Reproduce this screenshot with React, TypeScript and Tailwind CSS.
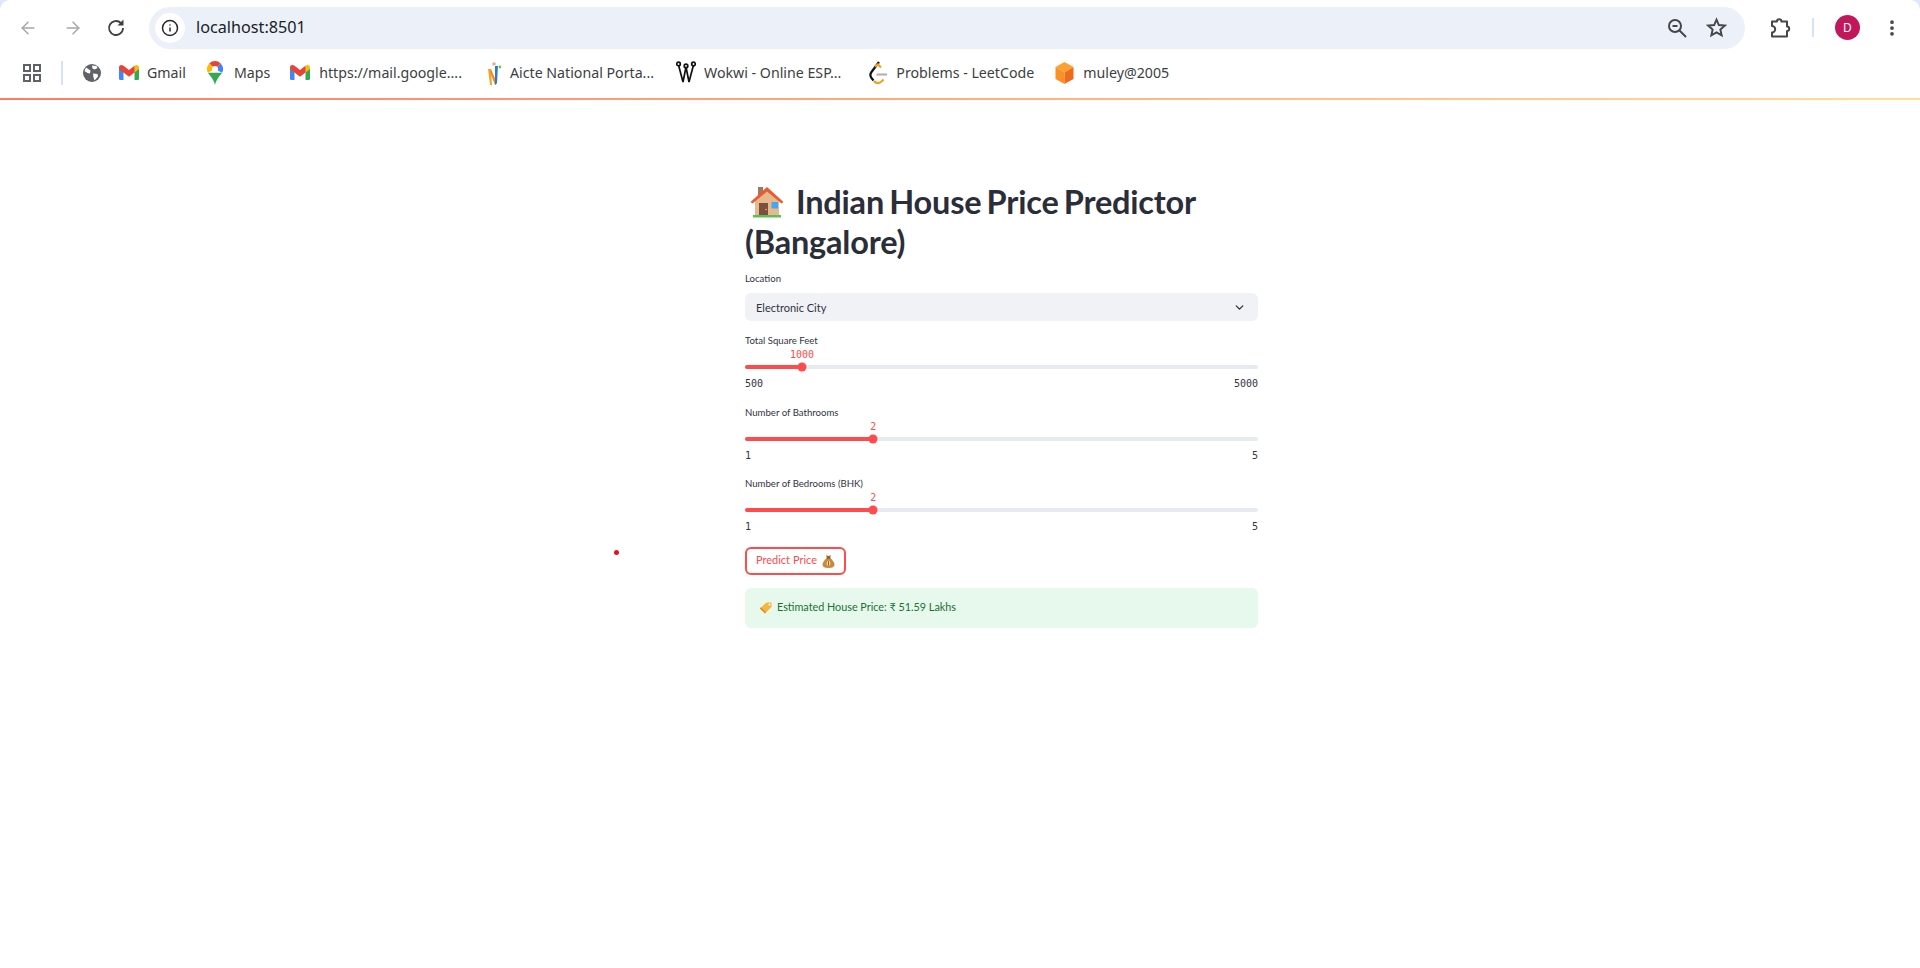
import { ArrowLeft, ArrowRight, Info, EllipsisVertical, ChevronDown } from "lucide-react";

const chromeFont = "font-['Noto_Sans','Open_Sans',sans-serif]";
const appFont = "font-['Lato','Noto_Sans',sans-serif]";
const monoFont = "font-['DejaVu_Sans_Mono','Liberation_Mono',monospace]";

const GmailIcon = () => (
  <svg width="20" height="15" viewBox="0 0 20 15">
    <path d="M0 3h4.500v12H1.200C.5 15 0 14.500 0 13.800z" fill="#4285f4" />
    <path d="M15.500 3H20v10.800c0 .7-.5 1.200-1.200 1.200h-3.300z" fill="#34a853" />
    <path d="M15.500.8Q16.500 0 17.500 0 20 0 20 2.500V4L15.500 7.500z" fill="#fbbc04" />
    <path d="M0 4V2.500Q0 0 2.500 0 3.500 0 4.500.8L10 5l5.500-4.200v6.700L10 11.800 4.500 7.500z" fill="#ea4335" />
  </svg>
);

const MapsIcon = () => (
  <svg width="16" height="24" viewBox="0 0 16 24">
    <path d="M1 11.800 15 11.800C13.500 14.500 9.500 17.500 8 24 6.500 17.500 2.500 14.500 1 11.800z" fill="#34a853" />
    <path d="M13.700 2.400A8 8 0 0 1 15 11.800L8 8z" fill="#4285f4" />
    <path d="M2.300 2.400A8 8 0 0 1 13.700 2.400L8 8z" fill="#ea4335" />
    <path d="M2.300 2.400A8 8 0 0 0 1 11.800L8 8z" fill="#fbbc04" />
    <circle cx="8" cy="8" r="3" fill="#fff" />
  </svg>
);

const AicteIcon = () => (
  <svg width="14" height="24" viewBox="0 0 14 24">
    <path d="M1 8h3l1 16H3z" fill="#f4a62a" />
    <path d="M4 8l6 14-2 2L3 11z" fill="#f08a24" />
    <path d="M8 5h3l-1 17-2 2z" fill="#2b7cc4" />
    <circle cx="7" cy="3" r="1.800" fill="#f2a98a" />
    <circle cx="13" cy="6" r="1.400" fill="#55c84a" />
  </svg>
);

const WokwiIcon = () => (
  <svg width="20" height="24" viewBox="0 0 20 24" fill="none" stroke="#111" strokeWidth="1.700">
    <path d="M2.500 4 7 21 10 6 13 21 17.500 4" />
    <circle cx="2.500" cy="3" r="1.800" />
    <circle cx="10" cy="5" r="1.800" />
    <circle cx="17.500" cy="3" r="1.800" />
  </svg>
);

const LeetcodeIcon = () => (
  <svg width="19" height="24" viewBox="0 0 19 24" fill="none" strokeWidth="2.200">
    <path d="M10 1 2.500 11c-1.500 2-1.500 4 0 6l2 2.500" stroke="#111" />
    <path d="M6 5.500 9 3.500l3 3" stroke="#f0a21b" />
    <path d="M5 20c2 2.500 5 2.500 7.500.5l2-2" stroke="#f0a21b" />
    <path d="M7.500 13.500H18" stroke="#b3b3b3" />
  </svg>
);

const CubeIcon = () => (
  <svg width="19" height="24" viewBox="0 0 19 24">
    <path d="M9.500 1 18.500 6 9.500 11.500.5 6z" fill="#ffa12e" />
    <path d="M.5 6l9 5.500V23l-9-5z" fill="#fb9026" />
    <path d="M9.500 11.500 18.500 6v12l-9 5z" fill="#ee6a1f" />
  </svg>
);

const GlobeIcon = () => (
  <svg width="18" height="18" viewBox="0 0 18 18">
    <circle cx="9" cy="9" r="9" fill="#5f6368" />
    <path d="M3 3.500 7.500 6.500 7 9.500 4.500 9 1.500 7zM9 1.500l4.500.5 1 2-3 1.500-2-1zM10 9.500l4.500.5.500 2.500-3.500 4-1-3z" fill="#fff" />
  </svg>
);

const GridIcon = () => (
  <svg width="18" height="18" viewBox="0 0 18 18" fill="none" stroke="#5f6368" strokeWidth="2">
    <rect x="1" y="1" width="6" height="6" />
    <rect x="11" y="1" width="6" height="6" />
    <rect x="1" y="11" width="6" height="6" />
    <rect x="11" y="11" width="6" height="6" />
  </svg>
);

const ReloadIcon = () => (
  <svg width="24" height="24" viewBox="0 0 24 24" className="ml-[21px]">
    <path d="M19 12a7 7 0 1 1-2.100-5" fill="none" stroke="#3c4043" strokeWidth="1.800" />
    <path d="M19.500 3.500V9.500H13.500z" fill="#3c4043" />
  </svg>
);

const ZoomOutIcon = () => (
  <svg width="24" height="24" viewBox="0 0 24 24" fill="none" stroke="#444746" strokeWidth="2" className="ml-auto">
    <circle cx="10" cy="10" r="6" />
    <path d="M14.500 14.500 21 21" />
    <path d="M7.500 10h5" />
  </svg>
);

const StarIcon = () => (
  <svg width="21" height="21" viewBox="0 0 24 24" fill="none" stroke="#444746" strokeWidth="2.200" className="mr-[18px] ml-[17px]">
    <path d="M12 3l2.700 6.200 6.800.6-5.100 4.500 1.500 6.700L12 17.500 6.100 21l1.500-6.700L2.500 9.800l6.800-.6z" />
  </svg>
);

const ExtensionIcon = () => (
  <svg width="24" height="24" viewBox="0 0 24 24" fill="none" stroke="#444746" strokeWidth="2" className="ml-[23px]">
    <path d="M4 5.500H9a2.200 2.200 0 0 1 4.400 0H19v5a2.200 2.200 0 0 1 0 4.400V20.500H4V16.500a3.200 3.200 0 0 0 0-6.400z" strokeLinejoin="round" />
  </svg>
);

const HouseEmoji = () => (
  <svg width="36" height="36" viewBox="0 0 36 36">
    <rect x="9" y="3" width="5" height="10" fill="#a1785c" />
    <path d="M6 16 18 6l12 10v15H6z" fill="#e8b98a" />
    <path d="M1.500 18 18 3l16.500 15-2 1.500L18 7.500 3.500 19.500z" fill="#ea5a35" />
    <rect x="10" y="19" width="9" height="12" fill="#7d4f3f" />
    <circle cx="17" cy="25.500" r=".8" fill="#e8b98a" />
    <rect x="22.500" y="18" width="6.500" height="6.500" fill="#3fa9f5" />
    <rect x="4" y="31" width="28" height="2.500" fill="#5cbf5c" />
  </svg>
);

const MoneyBag = () => (
  <svg width="13" height="14" viewBox="0 0 13 14">
    <path d="M4 1.200 6.500 2 9 1.200 8 4H5z" fill="#a8662d" />
    <path d="M5 4h3c2 1.500 4.500 4 4.500 6.500C12.500 13 10.500 14 6.500 14S.5 13 .5 10.500C.5 8 3 5.500 5 4z" fill="#c98a3c" />
    <rect x="4.600" y="3.500" width="3.800" height="1" fill="#7a4a1f" />
    <ellipse cx="6.500" cy="9.300" rx="1.800" ry="2.800" fill="#f3d9a4" />
    <rect x="6.100" y="7" width=".8" height="4.600" fill="#7a4a1f" />
  </svg>
);

const TagEmoji = () => (
  <svg width="13" height="12" viewBox="0 0 13 12">
    <path d="M7.500.500 12.500.500 12.500 5 6 11.500.8 6.500z" fill="#f4b63f" />
    <path d="M6 11.500.8 6.500 2 5.200 7 10.300z" fill="#d9922b" />
    <circle cx="10.500" cy="2.500" r="1" fill="#fff" />
  </svg>
);

const bookmarks = [
  { icon: <GmailIcon />, label: "Gmail", left: "ml-[18px]", textGap: "ml-[8px]" },
  { icon: <MapsIcon />, label: "Maps", left: "ml-[21px]", textGap: "ml-[11px]" },
  { icon: <GmailIcon />, label: "https://mail.google....", left: "ml-[20px]", textGap: "ml-[9px]" },
  { icon: <AicteIcon />, label: "Aicte National Porta...", left: "ml-[25px]", textGap: "ml-[9px]" },
  { icon: <WokwiIcon />, label: "Wokwi - Online ESP...", left: "ml-[22px]", textGap: "ml-[8px]" },
  { icon: <LeetcodeIcon />, label: "Problems - LeetCode", left: "ml-[28px]", textGap: "ml-[8px]" },
  { icon: <CubeIcon />, label: "muley@2005", left: "ml-[21px]", textGap: "ml-[9px]" },
];

const BrowserBar = () => (
  <div className={`${chromeFont} bg-[#dde8f8]`}>
    <div className="rounded-t-[10px] bg-white">
      <div className="flex h-[54px] items-center pt-[1px]">
        <ArrowLeft className="ml-[18px] text-[#a5a7aa]" size={20} strokeWidth={1.800} />
        <ArrowRight className="ml-[25px] text-[#a5a7aa]" size={20} strokeWidth={1.800} />
        <ReloadIcon />
        <div className="ml-[21px] flex h-[42px] w-[1596px] items-center rounded-full bg-[#ebf0f9]">
          <div className="ml-[6px] flex h-[30px] w-[30px] items-center justify-center rounded-full bg-white">
            <Info className="text-[#26282b]" size={18} strokeWidth={2} />
          </div>
          <span className="ml-[11px] text-[16.200px] text-[#202124]">localhost:8501</span>
          <ZoomOutIcon />
          <StarIcon />
        </div>
        <ExtensionIcon />
        <div className="ml-[20px] h-[19px] w-[2px] bg-[#d3e3fd]" />
        <div className="ml-[21px] flex h-[25px] w-[25px] items-center justify-center rounded-full bg-[#c2185b] text-[12px] text-white">
          D
        </div>
        <EllipsisVertical className="ml-[22px] text-[#444746]" size={20} strokeWidth={2.500} />
      </div>
      <div className="flex h-[44px] items-center pb-[6px]">
        <div className="ml-[23px]">
          <GridIcon />
        </div>
        <div className="ml-[20px] h-[24px] w-[2px] bg-[#d3e3fd]" />
        <div className="ml-[20px]">
          <GlobeIcon />
        </div>
        {bookmarks.map((b) => (
          <div key={b.label} className={`flex items-center ${b.left}`}>
            {b.icon}
            <span className={`${b.textGap} text-[14.200px] whitespace-nowrap text-[#3c4043]`}>{b.label}</span>
          </div>
        ))}
      </div>
      <div className="h-[2px] bg-gradient-to-r from-[#ff7a66] to-[#ffdf9a]" />
    </div>
  </div>
);

type SliderProps = {
  label: string;
  value: string;
  min: string;
  max: string;
  percent: number;
};

const Slider = ({ label, value, min, max, percent }: SliderProps) => (
  <div className="h-[71.500px]">
    <div className="text-[9.600px] leading-[14px] text-[#31333f]">{label}</div>
    <div className="relative h-[14px] text-[#ff4b4b]">
      <span
        className={`absolute top-0 -translate-x-1/2 ${monoFont} text-[10px] leading-[14px]`}
        style={{ left: `${percent}%` }}
      >
        {value}
      </span>
    </div>
    <div className="relative mt-[3px] h-[4px] rounded-full bg-[#e6eaf1]">
      <div className="h-full rounded-full bg-[#ff4b4b]" style={{ width: `${percent}%` }} />
      <div
        className="absolute top-1/2 h-[9px] w-[9px] -translate-x-1/2 -translate-y-1/2 rounded-full bg-[#ff4b4b]"
        style={{ left: `${percent}%` }}
      />
    </div>
    <div className={`mt-[8px] flex justify-between ${monoFont} text-[10px] leading-[14px] text-[#31333f]`}>
      <span>{min}</span>
      <span>{max}</span>
    </div>
  </div>
);

export default function App() {
  return (
    <div className={`relative min-h-[968px] bg-white ${appFont}`}>
      <BrowserBar />
      {/* cursor dot */}
      <div className="absolute top-[550px] left-[614px] h-[5px] w-[5px] rounded-full bg-[#e8101c]" />
      <main className="ml-[745px] w-[513px] pt-[78px]">
        <h1 className="text-[32.500px] leading-[40px] font-bold tracking-[-0.2px] text-[#2b2d39] [word-spacing:-2.500px]">
          <span className="mr-[11px] ml-[4px] inline-block translate-y-[6px]">
            <HouseEmoji />
          </span>
          Indian House Price Predictor (Bangalore)
        </h1>
        <div className="mt-[10px] text-[9.600px] leading-[14px] text-[#31333f]">Location</div>
        <div className="mt-[7px] flex h-[28px] items-center justify-between rounded-[6px] bg-[#f0f2f6] pr-[12px] pl-[11px] text-[11px] text-[#31333f]">
          <span className="pt-[2px]">Electronic City</span>
          <ChevronDown size={13} strokeWidth={2.500} />
        </div>
        <div className="mt-[13px]">
          <Slider label="Total Square Feet" value="1000" min="500" max="5000" percent={11.1} />
          <Slider label="Number of Bathrooms" value="2" min="1" max="5" percent={25} />
          <Slider label="Number of Bedrooms (BHK)" value="2" min="1" max="5" percent={25} />
        </div>
        <button className="-mt-[2px] flex h-[28px] w-[101px] items-center justify-center gap-[5px] rounded-[6px] border-2 border-[#ff4b4b] bg-white text-[11px] text-[#ff4b4b]">
          Predict Price <MoneyBag />
        </button>
        <div className="mt-[13px] flex h-[40px] items-center gap-[5px] rounded-[6px] bg-[#e7f8ed] pl-[14px] text-[10.800px] text-[#177233]">
          <TagEmoji />
          Estimated House Price: ₹ 51.59 Lakhs
        </div>
      </main>
    </div>
  );
}
